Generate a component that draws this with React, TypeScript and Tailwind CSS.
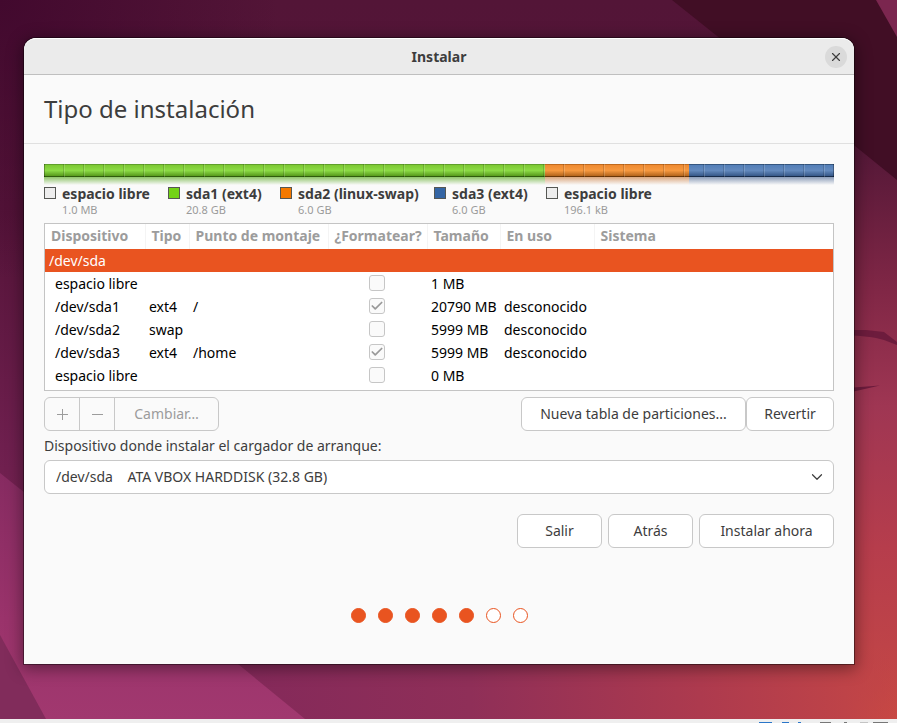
import { Check, ChevronDown, X } from "lucide-react";

const segments = [
  { name: "sda1", share: 501, bar: "bg-linear-to-b from-[#7cc832] via-[#8cdb45] to-[#579a1c]", edge: "border-t-[#5f9f2a] border-b-[#2f5c0c]", glow: "from-[#8fc46a]" },
  { name: "sda2", share: 144, bar: "bg-linear-to-b from-[#ee8a31] via-[#f7993f] to-[#b3651c]", edge: "border-t-[#c06a1d] border-b-[#6b3708]", glow: "from-[#dba880]" },
  { name: "sda3", share: 145, bar: "bg-linear-to-b from-[#537fb8] via-[#6389bd] to-[#365888]", edge: "border-t-[#35567f] border-b-[#172b4a]", glow: "from-[#8b9cb8]" },
];

const legend = [
  { name: "espacio libre", size: "1.0 MB", color: "bg-[#ededed]" },
  { name: "sda1 (ext4)", size: "20.8 GB", color: "bg-[#73d216]" },
  { name: "sda2 (linux-swap)", size: "6.0 GB", color: "bg-[#f57900]" },
  { name: "sda3 (ext4)", size: "6.0 GB", color: "bg-[#3465a4]" },
  { name: "espacio libre", size: "196.1 kB", color: "bg-[#ededed]" },
];

const columns = [
  { title: "Dispositivo", width: "w-[100px]" },
  { title: "Tipo", width: "w-[44px]" },
  { title: "Punto de montaje", width: "w-[139px]" },
  { title: "¿Formatear?", width: "w-[99px]" },
  { title: "Tamaño", width: "w-[73px]" },
  { title: "En uso", width: "w-[94px]" },
  { title: "Sistema", width: "" },
];

const partitions = [
  { device: "espacio libre", type: "", mount: "", format: false, size: "1 MB", used: "" },
  { device: "/dev/sda1", type: "ext4", mount: "/", format: true, size: "20790 MB", used: "desconocido" },
  { device: "/dev/sda2", type: "swap", mount: "", format: false, size: "5999 MB", used: "desconocido" },
  { device: "/dev/sda3", type: "ext4", mount: "/home", format: true, size: "5999 MB", used: "desconocido" },
  { device: "espacio libre", type: "", mount: "", format: false, size: "0 MB", used: "" },
];

const steps = [true, true, true, true, true, false, false];

const button = "h-[34px] rounded-md border border-[#c8c8c8] bg-white";

function Wallpaper() {
  return (
    <svg className="absolute inset-0 h-full w-full" viewBox="0 0 897 719" preserveAspectRatio="none" aria-hidden="true">
      <defs>
        <linearGradient id="base" gradientUnits="userSpaceOnUse" x1="0" y1="0" x2="0" y2="719">
          <stop offset="0" stopColor="#531537" />
          <stop offset="0.3" stopColor="#551439" />
          <stop offset="0.62" stopColor="#6e1f4e" />
          <stop offset="1" stopColor="#852a5a" />
        </linearGradient>
        <radialGradient id="corner" gradientUnits="userSpaceOnUse" cx="0" cy="0" r="280">
          <stop offset="0" stopColor="#42092e" />
          <stop offset="1" stopColor="#42092e" stopOpacity="0" />
        </radialGradient>
        <linearGradient id="right" gradientUnits="userSpaceOnUse" x1="0" y1="150" x2="0" y2="719">
          <stop offset="0" stopColor="#551838" />
          <stop offset="0.25" stopColor="#812746" />
          <stop offset="0.45" stopColor="#9f3653" />
          <stop offset="0.7" stopColor="#b63d4c" />
          <stop offset="0.87" stopColor="#be4348" />
          <stop offset="1" stopColor="#c84843" />
        </linearGradient>
        <linearGradient id="floor" gradientUnits="userSpaceOnUse" x1="240" y1="0" x2="897" y2="0">
          <stop offset="0" stopColor="#84295a" />
          <stop offset="0.35" stopColor="#8f2f58" />
          <stop offset="0.7" stopColor="#ad3a4e" />
          <stop offset="0.92" stopColor="#be4348" />
          <stop offset="1" stopColor="#be4348" stopOpacity="0" />
        </linearGradient>
        <linearGradient id="wedge" gradientUnits="userSpaceOnUse" x1="0" y1="470" x2="0" y2="719">
          <stop offset="0" stopColor="#862b61" />
          <stop offset="0.6" stopColor="#9a336b" />
          <stop offset="1" stopColor="#a1386f" />
        </linearGradient>
      </defs>
      <rect width="897" height="719" fill="url(#base)" />
      <rect width="300" height="300" fill="url(#corner)" />
      <rect x="600" y="120" width="297" height="599" fill="url(#right)" />
      <path d="M672 0H897V180L860 150Z" fill="#410e25" />
      <path d="M876 0H897V37Z" fill="#7b264f" />
      <path d="M847 330H866L884 332L897 342V345L884 340C874 337 862 336 847 335Z" fill="#6d1c3d" />
      <path d="M847 388L880 385.500L847 393Z" fill="#6d1c3d" />
      <path d="M200 633H897V719H200Z" fill="url(#floor)" />
      <path d="M0 473L200 633L305 719H0Z" fill="url(#wedge)" />
      <path d="M0 635L46 719H0Z" fill="#812c5b" />
    </svg>
  );
}

export default function App() {
  return (
    <div className="flex min-h-screen flex-col bg-[#efefef] font-['Noto_Sans','Open_Sans',sans-serif] text-[14px] leading-5 text-[#3d3d3d]">
      <div className="relative flex flex-1 flex-col pt-[38px] pr-[43px] pb-[55px] pl-6">
        <Wallpaper />
        <main className="relative flex flex-1 flex-col rounded-t-xl bg-[#fafafa] shadow-[0_0_0_1px_rgba(0,0,0,0.4),0_3px_16px_2px_rgba(0,0,0,0.4)]">
          <header className="grid h-[37px] grid-cols-[1fr_auto_1fr] items-center rounded-t-xl border-t border-b border-t-white border-b-[#bfbfbf] bg-[#ebebeb] px-[7px]">
            <h1 className="col-start-2 font-bold">Instalar</h1>
            <button aria-label="Cerrar" className="grid size-[22px] place-items-center justify-self-end rounded-full bg-[#dadada]">
              <X size={14} strokeWidth={2} />
            </button>
          </header>

          <div className="flex h-[69px] items-center border-b border-[#e0e0e0] px-5">
            <h2 className="text-[24px] leading-8">Tipo de instalación</h2>
          </div>

          <div className="flex flex-1 flex-col px-5 pt-5">
            <div className="relative flex">
              {segments.map((s) => (
                <div key={s.name} className="basis-0" style={{ flexGrow: s.share }}>
                  <div className={`h-[13px] border-t border-b ${s.bar} ${s.edge}`} />
                  <div className={`h-2 bg-linear-to-b to-transparent ${s.glow}`} />
                </div>
              ))}
              <div className="absolute inset-x-0 top-0 h-[13px] border-x border-black/30 bg-[repeating-linear-gradient(90deg,transparent_0_18px,rgba(0,0,0,0.14)_18px_19px,rgba(255,255,255,0.16)_19px_20px)]" />
            </div>

            <ul className="mt-px grid grid-cols-[124px_112px_154px_112px_auto]">
              {legend.map((l, i) => (
                <li key={i} className="flex gap-1.5 whitespace-nowrap">
                  <span className={`mt-px size-3 shrink-0 border border-[#555753] ${l.color}`} />
                  <span className="flex flex-col">
                    <b className="leading-4">{l.name}</b>
                    <small className="text-[11px] leading-4 text-[#9a9a9a]">{l.size}</small>
                  </span>
                </li>
              ))}
            </ul>

            <div className="mt-[5px] border border-[#c4c4c4] bg-white pb-[3px]">
              <table className="w-full table-fixed border-collapse text-left">
                <thead>
                  <tr className="h-[25px] text-[#9c9c9c]">
                    {columns.map((c) => (
                      <th key={c.title} className={`border-r border-[#f4f4f4] p-0 pb-px pl-1.5 font-bold whitespace-nowrap last:border-r-0 ${c.width}`}>
                        {c.title}
                      </th>
                    ))}
                  </tr>
                </thead>
                <tbody className="text-black">
                  <tr className="h-[23px] bg-[#e95420] text-white">
                    <td colSpan={7} className="p-0 pl-1">/dev/sda</td>
                  </tr>
                  {partitions.map((p, i) => (
                    <tr key={i} className="h-[23px] whitespace-nowrap">
                      <td className="p-0 pl-2.5">{p.device}</td>
                      <td className="p-0 pl-1">{p.type}</td>
                      <td className="p-0 pl-1">{p.mount}</td>
                      <td className="p-0 pr-0.5 pb-0.5">
                        <span className="grid place-items-center">
                          <input
                            type="checkbox"
                            disabled
                            checked={p.format}
                            readOnly
                            aria-label={`Formatear ${p.device}`}
                            className="col-start-1 row-start-1 size-4 appearance-none rounded-[3px] border border-[#c6c6c6] bg-[#fafafa]"
                          />
                          {p.format && <Check size={14} strokeWidth={3} className="col-start-1 row-start-1 text-[#999]" />}
                        </span>
                      </td>
                      <td className="p-0 pl-1">{p.size}</td>
                      <td className="p-0 pl-1">{p.used}</td>
                      <td className="p-0" />
                    </tr>
                  ))}
                </tbody>
              </table>
            </div>

            <div className="mt-1.5 flex justify-between">
              <div className="flex h-[34px] divide-x divide-[#c8c8c8] rounded-md border border-[#c8c8c8] text-[#9c9c9c]">
                <button disabled aria-label="Añadir" className="grid w-[35px] place-items-center">
                  <svg width="11" height="11" viewBox="0 0 11 11" stroke="currentColor"><path d="M0 5.500H11M5.500 0V11" /></svg>
                </button>
                <button disabled aria-label="Quitar" className="grid w-[35px] place-items-center">
                  <svg width="11" height="11" viewBox="0 0 11 11" stroke="currentColor"><path d="M0 5.500H11" /></svg>
                </button>
                <button disabled className="w-[103px]">Cambiar…</button>
              </div>
              <div className="flex">
                <button className={`w-[225px] ${button}`}>Nueva tabla de particiones...</button>
                <button className={`w-[88px] ${button}`}>Revertir</button>
              </div>
            </div>

            <label htmlFor="bootloader" className="mt-[5px]">Dispositivo donde instalar el cargador de arranque:</label>
            <div className="mt-1 grid items-center">
              <select id="bootloader" className={`col-start-1 row-start-1 w-full appearance-none px-[11px] ${button}`}>
                <option>/dev/sda{"\u00a0\u00a0\u00a0\u00a0"}ATA VBOX HARDDISK (32.8 GB)</option>
              </select>
              <ChevronDown size={18} strokeWidth={1.6} className="pointer-events-none col-start-1 row-start-1 mr-2 justify-self-end" />
            </div>

            <div className="mt-5 flex justify-end gap-1.5">
              <button className={`w-[85px] ${button}`}>Salir</button>
              <button className={`w-[85px] ${button}`}>Atrás</button>
              <button className={`w-[135px] ${button}`}>Instalar ahora</button>
            </div>

            <div className="mt-[60px] flex justify-center gap-3">
              {steps.map((done, i) => (
                <span key={i} className={`size-[15px] rounded-full border border-[#e95420] ${done ? "bg-[#e95420]" : "bg-white"}`} />
              ))}
            </div>
          </div>
        </main>
      </div>

      <footer className="flex h-1 items-end justify-end pr-[9px]">
        <svg width="129" height="1" viewBox="0 0 129 1" aria-hidden="true">
          <path d="M0 0H13V1H0ZM23 0H30V1H23ZM39 0H42V1H39Z" fill="#2a76c9" />
          <path d="M61 0H72V1H61ZM85 0H88V1H85ZM114 0H129V1H114Z" fill="#777" />
          <path d="M101 0H109V1H101Z" fill="#c4c4c4" />
        </svg>
      </footer>
    </div>
  );
}
